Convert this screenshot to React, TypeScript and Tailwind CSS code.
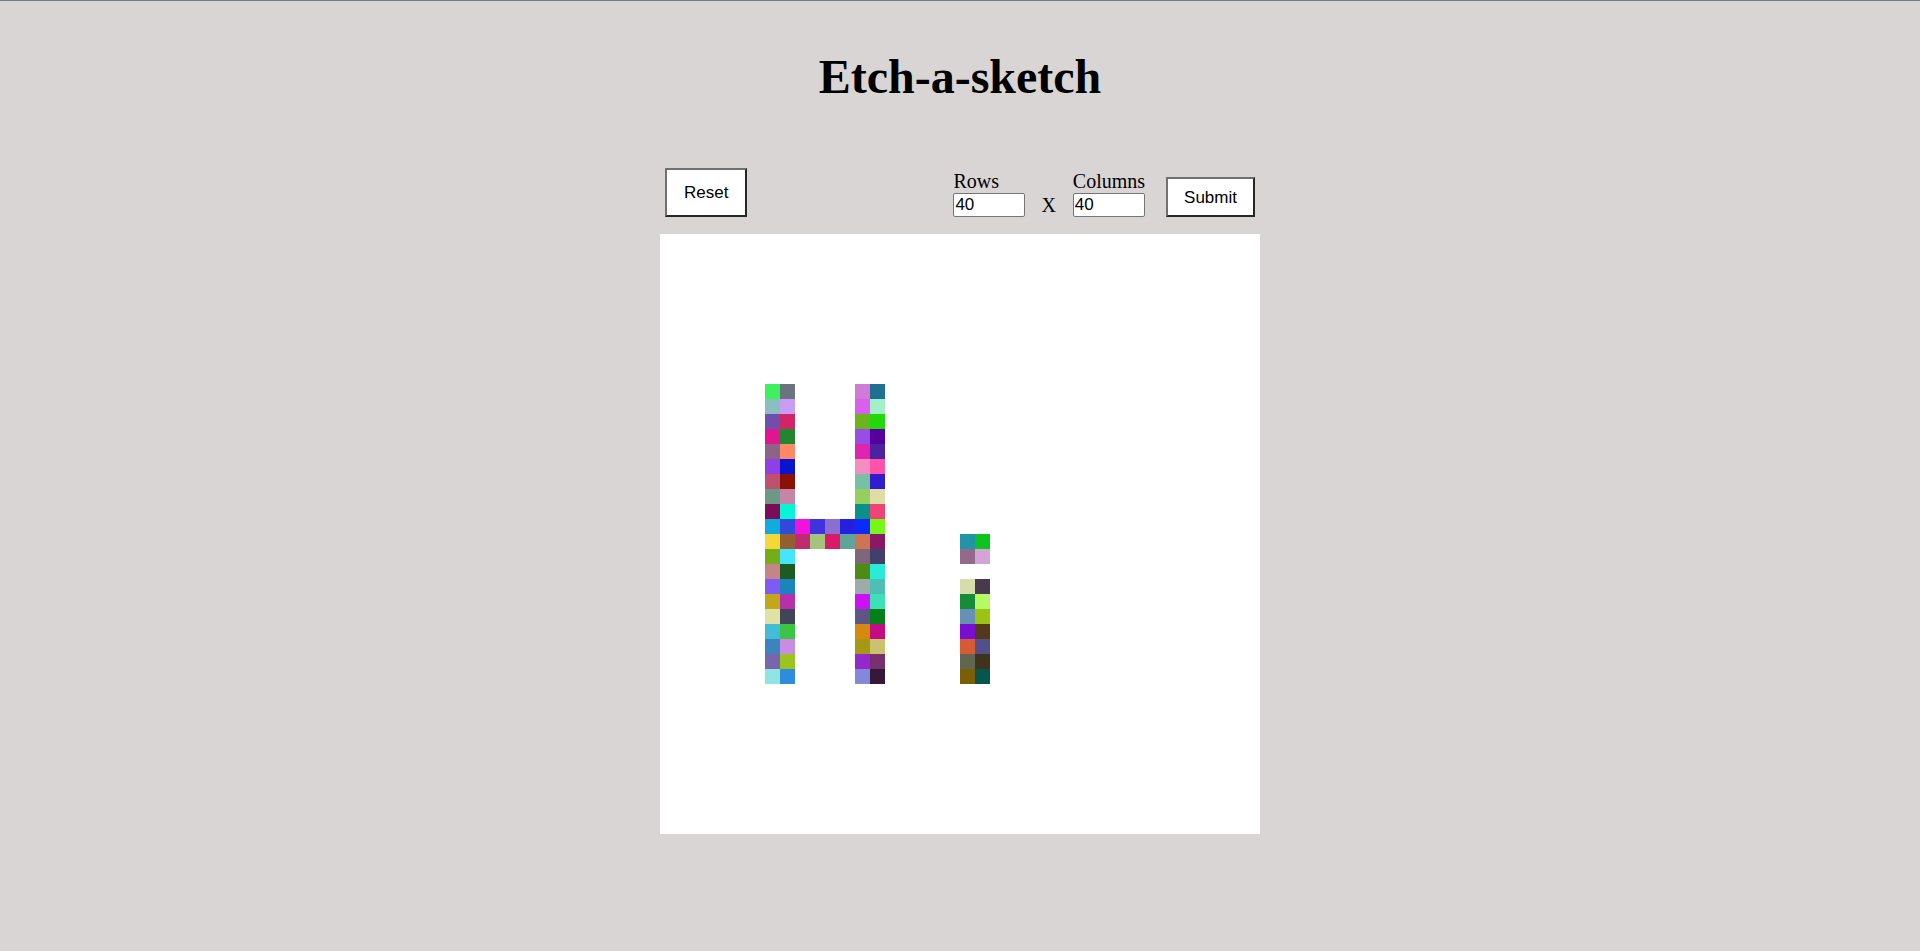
import React from 'react';

// painted cells: [row, col, colour]
const painted: [number, number, string][] = [
  // H left stroke + right stroke, rows 10..29
  [10, 7, '#3ef060'], [10, 8, '#6b7280'], [10, 13, '#d17ad6'], [10, 14, '#1e7090'],
  [11, 7, '#8abfc0'], [11, 8, '#c99df5'], [11, 13, '#d860ec'], [11, 14, '#a3f0c8'],
  [12, 7, '#6f4faa'], [12, 8, '#d42468'], [12, 13, '#6ab51a'], [12, 14, '#22d80a'],
  [13, 7, '#e0158f'], [13, 8, '#22862e'], [13, 13, '#9a4de6'], [13, 14, '#56009e'],
  [14, 7, '#8a6585'], [14, 8, '#ff8866'], [14, 13, '#e024b0'], [14, 14, '#4d22a0'],
  [15, 7, '#8e3fe6'], [15, 8, '#0a14cc'], [15, 13, '#f28fc0'], [15, 14, '#ff52a8'],
  [16, 7, '#c05070'], [16, 8, '#8a1200'], [16, 13, '#78c0a5'], [16, 14, '#301dcc'],
  [17, 7, '#6a9a85'], [17, 8, '#c585a8'], [17, 13, '#94cf60'], [17, 14, '#dfdca8'],
  [18, 7, '#7c0c58'], [18, 8, '#05f5d5'], [18, 13, '#0a9088'], [18, 14, '#ee4477'],
  [19, 7, '#12abe0'], [19, 8, '#2f4ad8'], [19, 9, '#f212dd'], [19, 10, '#3f33de'],
  [19, 11, '#8a6fd0'], [19, 12, '#2420e0'], [19, 13, '#0a2aff'], [19, 14, '#7af518'],
  [20, 7, '#f2d838'], [20, 8, '#955e30'], [20, 9, '#c02a70'], [20, 10, '#a3c47a'],
  [20, 11, '#dc1868'], [20, 12, '#5fa39a'], [20, 13, '#cc7555'], [20, 14, '#8a1866'],
  [21, 7, '#74ac1a'], [21, 8, '#45e5ff'], [21, 13, '#7e6878'], [21, 14, '#42406a'],
  [22, 7, '#c48488'], [22, 8, '#1c5c22'], [22, 13, '#4c8c14'], [22, 14, '#2aeada'],
  [23, 7, '#7f5af5'], [23, 8, '#1a84bd'], [23, 13, '#9dacaa'], [23, 14, '#4ebfb5'],
  [24, 7, '#c2a818'], [24, 8, '#b630ac'], [24, 13, '#ce10f5'], [24, 14, '#3ee0b8'],
  [25, 7, '#dfe2a6'], [25, 8, '#42445a'], [25, 13, '#5e5488'], [25, 14, '#048018'],
  [26, 7, '#44bcd8'], [26, 8, '#3cc444'], [26, 13, '#d48a0c'], [26, 14, '#c40c84'],
  [27, 7, '#3d84be'], [27, 8, '#c88ce2'], [27, 13, '#a59814'], [27, 14, '#c9c26e'],
  [28, 7, '#7a64ae'], [28, 8, '#9bc41e'], [28, 13, '#9528cc'], [28, 14, '#773070'],
  [29, 7, '#8ee5e2'], [29, 8, '#2f8cdc'], [29, 13, '#8488d8'], [29, 14, '#361838'],
  // i
  [20, 20, '#2294a8'], [20, 21, '#0cc420'],
  [21, 20, '#94698a'], [21, 21, '#d2a5d6'],
  [23, 20, '#d6dcaa'], [23, 21, '#473a4c'],
  [24, 20, '#168c3a'], [24, 21, '#b5f964'],
  [25, 20, '#6690b5'], [25, 21, '#9ac314'],
  [26, 20, '#7a0ed0'], [26, 21, '#55381c'],
  [27, 20, '#d65a34'], [27, 21, '#52508c'],
  [28, 20, '#626650'], [28, 21, '#40331c'],
  [29, 20, '#7c5e08'], [29, 21, '#06564e'],
];

const SIZE = 40;
const colours = new Map(painted.map(([r, c, col]) => [r * SIZE + c, col]));

const serif = "font-['Liberation_Serif',serif]";
const sans = "font-['Liberation_Sans',Arial,sans-serif]";

export default function App() {
  return (
    <div className="min-h-[951px] bg-[#d9d5d4] border-t border-[#6e808c] flex flex-col items-center">
      <h1 className={`${serif} mt-[48px] text-[48px] leading-[55px] font-bold text-black`}>
        Etch-a-sketch
      </h1>

      {/* Controls */}
      <div className="mt-[64px] w-[600px] px-[5px] flex items-end justify-between">
        <button
          className={`${sans} text-[17px] leading-[21px] text-black bg-white px-[17px] py-[12px] border-2 border-t-[#707070] border-l-[#707070] border-r-[#262626] border-b-[#262626]`}
        >
          Reset
        </button>

        <div className="flex items-end">
          <div className="flex flex-col">
            <label className={`${serif} text-[20px] leading-[23px] text-black`}>Rows</label>
            <input
              defaultValue="40"
              className={`${sans} w-[72px] h-[24px] text-[17px] px-[1px] bg-white border border-[#767676] rounded-[2px] text-black outline-none`}
            />
          </div>
          <span className={`${serif} ml-[16px] mr-[17px] text-[20px] leading-[23px] text-black`}>X</span>
          <div className="flex flex-col">
            <label className={`${serif} text-[20px] leading-[23px] text-black`}>Columns</label>
            <input
              defaultValue="40"
              className={`${sans} w-[72px] h-[24px] text-[17px] px-[1px] bg-white border border-[#767676] rounded-[2px] text-black outline-none`}
            />
          </div>
          <button
            className={`${sans} ml-[21px] text-[17px] leading-[21px] text-black bg-white px-4 py-[7.5px] border-2 border-t-[#707070] border-l-[#707070] border-r-[#262626] border-b-[#262626]`}
          >
            Submit
          </button>
        </div>
      </div>

      {/* Sketch grid */}
      <div className="mt-[17px] w-[600px] h-[600px] bg-white grid grid-cols-[repeat(40,15px)] grid-rows-[repeat(40,15px)]">
        {Array.from({ length: SIZE * SIZE }, (_, i) => (
          <div key={i} style={colours.has(i) ? { backgroundColor: colours.get(i) } : undefined} />
        ))}
      </div>
    </div>
  );
}
